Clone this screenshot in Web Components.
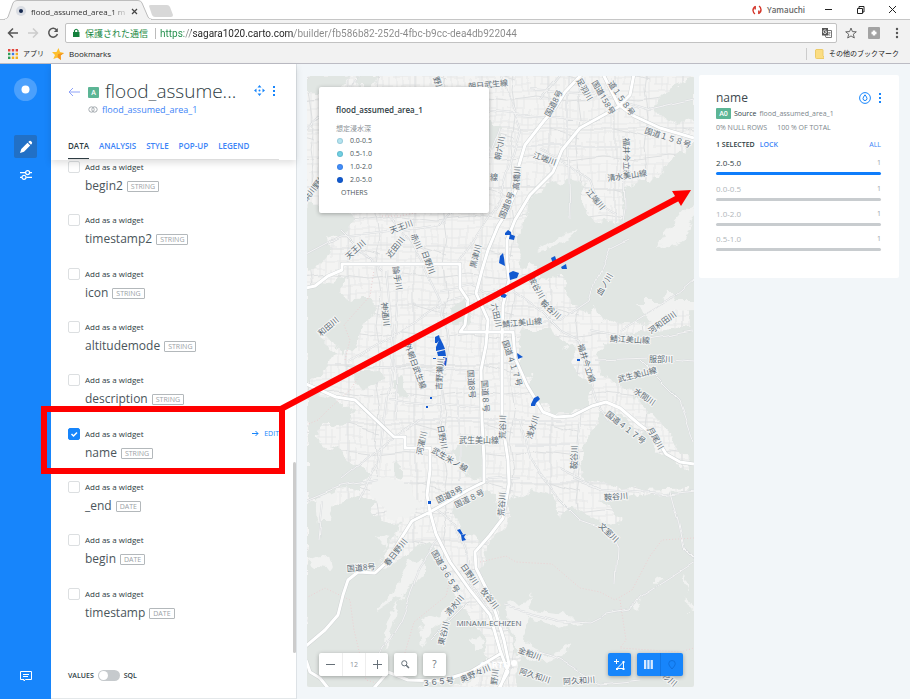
<!DOCTYPE html>
<html lang="ja">
<head>
<meta charset="utf-8">
<title>flood_assumed_area_1 map</title>
<style>
  html, body { height: 100%; }
  body {
    margin: 0; display: flex; flex-direction: column; overflow: hidden;
    font-family: "Open Sans", "Noto Sans CJK JP", sans-serif;
    color: #2e3c43; background: #f2f6f9;
  }
  main { flex: 1; min-height: 0; display: flex; }
</style>
</head>
<body>
<tab-strip><browser-tab>flood_assumed_area_1 m</browser-tab></tab-strip>
<browser-toolbar></browser-toolbar>
<bookmark-bar></bookmark-bar>
<main>
  <app-rail></app-rail>
  <layer-panel>
    <field-row field="begin2" type="STRING"></field-row>
    <field-row field="timestamp2" type="STRING"></field-row>
    <field-row field="icon" type="STRING"></field-row>
    <field-row field="altitudemode" type="STRING"></field-row>
    <field-row field="description" type="STRING"></field-row>
    <field-row field="name" type="STRING" checked></field-row>
    <field-row field="_end" type="DATE"></field-row>
    <field-row field="begin" type="DATE"></field-row>
    <field-row field="timestamp" type="DATE"></field-row>
  </layer-panel>
  <map-view>
    <map-legend slot="legend"></map-legend>
    <map-controls slot="controls"></map-controls>
  </map-view>
  <category-widget>
    <category-item count="1" active>2.0-5.0</category-item>
    <category-item count="1">0.0-0.5</category-item>
    <category-item count="1">1.0-2.0</category-item>
    <category-item count="1">0.5-1.0</category-item>
  </category-widget>
</main>
<callout-arrow></callout-arrow>

<script>
const base = `
  :host, *, *::before, *::after { box-sizing: border-box; }
  button { font: inherit; color: inherit; background: none; border: 0; padding: 0; margin: 0; display: flex; align-items: center; justify-content: center; cursor: pointer; }
  a { text-decoration: none; }
  svg { display: block; flex: none; }
`;
function element(tag, render, after) {
  customElements.define(tag, class extends HTMLElement {
    connectedCallback() {
      if (this.shadowRoot) return;
      const root = this.attachShadow({ mode: 'open' });
      const tpl = document.createElement('template');
      tpl.innerHTML = `<style>${base}</style>` + render(this);
      root.append(tpl.content.cloneNode(true));
      if (after) after(root);
    }
  });
}

/* ---------- browser window ---------- */
element('tab-strip', () => `
  <style>
    :host { display: flex; align-items: flex-start; height: 20px; background: #fff; border-bottom: 1px solid #c6c6c6; }
    .new { width: 26px; height: 12px; margin: 5px 0 0 -4px; }
    .win { margin-left: auto; display: flex; align-items: center; height: 19px; padding-right: 11px; font-size: 8px; color: #777; }
    .win button { width: 14px; height: 14px; }
    .user { gap: 5px; display: flex; align-items: center; margin-right: 16px; color: #666; font-weight: 600; }
    .ctl { display: flex; gap: 18px; }
  </style>
  <slot></slot>
  <button class="new" aria-label="New tab"><svg width="26" height="12"><path d="M1 1Q1 0 3 0H19Q21 0 22 2L25 10Q25 12 23 12H7Q5 12 4 10Z" fill="#d8d8d8"/></svg></button>
  <div class="win">
    <span class="user"><svg width="10" height="10" fill="none" stroke="#d4362a" stroke-width="1.4"><path d="M3.5 1.3Q.8 3 1 5.500Q1.300 8 3 9M6.500 8.700Q9.200 7 9 4.500Q8.700 2 7 1M3.200 1V4.500M6.800 5.500V9"/></svg>Yamauchi</span>
    <span class="ctl">
      <button aria-label="Minimize"><svg width="9" height="9"><path d="M1 4.500H8" stroke="#222"/></svg></button>
      <button aria-label="Restore"><svg width="9" height="9" fill="none" stroke="#222"><path d="M1.500 3.500H6.500V8.500H1.500ZM3 3V1.500H8V7H7"/></svg></button>
      <button aria-label="Close"><svg width="9" height="9"><path d="M1 1L8 8M8 1L1 8" stroke="#222"/></svg></button>
    </span>
  </div>`);

element('browser-tab', () => `
  <style>
    :host { display: flex; position: relative; width: 148px; height: 20px; margin-left: 4px; align-items: center; font: 8px "Open Sans", sans-serif; color: #333; padding: 2px 9px 0 12px; }
    .shape { position: absolute; inset: 0; }
    .dot { position: relative; margin-right: 5px; }
    span { position: relative; flex: 1; white-space: nowrap; overflow: hidden; -webkit-mask-image: linear-gradient(90deg, #000 85%, rgba(0,0,0,.3) 95%); }
    button { position: relative; width: 9px; height: 9px; margin: 0 4px 0 3px; }
  </style>
  <svg class="shape" width="148" height="20"><path d="M0 19.500Q3 19 4 17L9 3Q10 .5 13 .5H134Q137 .5 138 3L144 17Q145 19 148 19.500V20H0Z" fill="#f2f2f2" stroke="#bdbdbd"/><path d="M1 20H147" stroke="#f2f2f2" stroke-width="2"/></svg>
  <svg class="dot" width="10" height="10"><circle cx="5" cy="5" r="5" fill="#d9dce2"/><circle cx="5" cy="5" r="2" fill="#16294f"/></svg>
  <span><slot></slot></span>
  <button aria-label="Close tab"><svg width="7" height="7"><path d="M1 1L6 6M6 1L1 6" stroke="#444" stroke-width="1.200"/></svg></button>`);

element('browser-toolbar', () => `
  <style>
    :host { display: flex; align-items: center; height: 25px; padding: 1px 7px 0; background: #f2f2f2; }
    nav { display: flex; gap: 8px; width: 58px; }
    nav button { width: 12px; height: 12px; }
    .box { flex: 1; display: flex; align-items: center; height: 20px; background: #fff; border: 1px solid #c2c2c2; border-radius: 2px; padding: 0 4px 0 6px; font-size: 9px; }
    .safe { color: #1b8a45; display: flex; gap: 5px; align-items: center; padding-right: 7px; margin-right: 4px; border-right: 1px solid #bbb; font-family: "Open Sans","Noto Sans CJK JP",sans-serif; line-height: 11px; }
    input { flex: 1; min-width: 0; border: 0; outline: 0; padding: 0; margin: 0; height: 16px; font: 10px Roboto, sans-serif; color: #666;
      background: linear-gradient(90deg, #1b8a45 0 24px, #888 24px 31px, #222 31px 134px, #888 134px); -webkit-background-clip: text; background-clip: text; -webkit-text-fill-color: transparent; }
    .right { display: flex; align-items: center; gap: 11px; margin-left: 8px; }
  </style>
  <nav>
    <button aria-label="Back"><svg width="12" height="12" fill="none" stroke="#555" stroke-width="1.500"><path d="M11 6H1.500M6 1.500L1.500 6L6 10.500"/></svg></button>
    <button aria-label="Forward"><svg width="12" height="12" fill="none" stroke="#ccc" stroke-width="1.500"><path d="M1 6H10.500M6 1.500L10.500 6L6 10.500"/></svg></button>
    <button aria-label="Reload"><svg width="12" height="12" fill="none" stroke="#555" stroke-width="1.500"><path d="M9.800 3.200A4.400 4.400 0 1 0 10.400 7"/><path d="M10.800 1V5H6.800Z" fill="#555" stroke="none"/></svg></button>
  </nav>
  <div class="box">
    <span class="safe"><svg width="8" height="10"><rect x="1" y="4" width="6.500" height="5" fill="#14803c"/><path d="M2.500 4V2.500Q4.200 0 6 2.500V4" fill="none" stroke="#14803c" stroke-width="1.200"/></svg>保護された通信</span>
    <input aria-label="Address" value="https://sagara1020.carto.com/builder/fb586b82-252d-4fbc-b9cc-dea4db922044">
    <button aria-label="Translate"><svg width="10" height="10"><path d="M5 2.500H9.500V9.500H4L3 7" fill="#fff" stroke="#777"/><rect x="0" y="0" width="6" height="7.500" fill="#555"/><path d="M3 3.700H4.600Q4.400 5.600 3 5.600Q1.400 5.500 1.300 3.700Q1.500 1.900 3 1.900Q3.800 1.900 4.300 2.500" fill="none" stroke="#fff" stroke-width=".8"/><path d="M6 4.800H8.700M7.300 4.200V5.500Q7 7 5.800 7.600M6.500 6L8.300 8" fill="none" stroke="#777" stroke-width=".8"/></svg></button>
  </div>
  <div class="right">
    <button aria-label="Bookmark this page"><svg width="12" height="12"><path d="M6 1L7.400 4.600L11.300 4.800L8.300 7.200L9.300 11L6 8.900L2.700 11L3.700 7.200L.7 4.800L4.600 4.600Z" fill="none" stroke="#666"/></svg></button>
    <button aria-label="Extension"><svg width="12" height="12"><rect width="12" height="12" rx="1" fill="#a3a3a3"/><path d="M6 3.500V8.500M3.500 6H8.500" stroke="#fff" stroke-width="2.400"/></svg></button>
    <button aria-label="Menu"><svg width="12" height="12" fill="#555"><circle cx="6" cy="2" r="1.200"/><circle cx="6" cy="6" r="1.200"/><circle cx="6" cy="10" r="1.200"/></svg></button>
  </div>`);

element('bookmark-bar', () => `
  <style>
    :host { display: flex; align-items: center; height: 19px; padding: 0 11px 0 8px; background: #f2f2f2; border-bottom: 1px solid #bcbcc4; font: 8px "Open Sans","Noto Sans CJK JP",sans-serif; }
    a { display: flex; align-items: center; gap: 5px; color: #222; margin-right: 8px; white-space: nowrap; line-height: 12px; }
    .other { margin: 0 0 0 auto; border-left: 1px solid #ccc; padding-left: 8px; }
    .jp { font-size: 7px; }
  </style>
  <a href="#apps" class="jp"><svg width="10" height="10"><g fill="#e2453c"><path d="M0 0h2.400v2.400H0zM3.800 0h2.400v2.400H3.800zM7.600 0H10v2.400H7.600z"/></g><path d="M0 3.800h2.400v2.400H0z" fill="#2f9e58"/><path d="M3.800 3.800h2.400v2.400H3.800z" fill="#3b78e7"/><path d="M7.600 3.800H10v2.400H7.600zM3.800 7.600h2.400V10H3.800zM7.600 7.600H10V10H7.600z" fill="#f2b01e"/><path d="M0 7.600h2.400V10H0z" fill="#2f9e58"/></svg>アプリ</a>
  <a href="#bookmarks"><svg width="12" height="12"><path d="M6.500 0L8 4L12 5L8.600 7.500L9 12L5.500 9.500L1.300 11L3 7L0 4L4.500 4Z" fill="#fdbf2d"/><path d="M6 6L12 5L8.600 7.500L9 12L5.500 9.500Z" fill="#f4941e"/></svg>Bookmarks</a>
  <a href="#other" class="other jp"><svg width="9" height="10"><path d="M1 .5H7.500Q8 .5 8 1V7L9 8V9.500H1.500Q.5 9.500 .5 8.500V1Z" fill="#fbdd82" stroke="#eccb68"/></svg>その他のブックマーク</a>`);

/* ---------- left rail ---------- */
element('app-rail', () => `
  <style>
    :host { display: flex; flex-direction: column; align-items: center; width: 51px; flex: none; background: #1785fb; padding: 14px 0 15px; }
    button { width: 23px; height: 23px; border-radius: 2px; }
    .logo { border-radius: 50%; background: #4ba0fc; margin-bottom: 34px; }
    .on { background: #2170c6; margin-bottom: 5px; }
    .chat { margin-top: auto; height: 16px; }
  </style>
  <button class="logo" aria-label="Home"><svg width="9" height="9"><circle cx="4.500" cy="4.500" r="4" fill="#fff"/></svg></button>
  <button class="on" aria-label="Edit"><svg width="14" height="14" fill="#fff"><path d="M1 13L2.300 9L8.500 2.800L11.200 5.500L5 11.700ZM9.300 2L10.400 .9Q11.400 .3 12.400 1.400Q13.600 2.500 13 3.600L12 4.700Z"/></svg></button>
  <button aria-label="Settings"><svg width="12" height="10" fill="none" stroke="#fff" stroke-width="1.200"><path d="M0 2.600H5.500M9.800 2.600H12M0 7.300H2M6.300 7.300H12"/><circle cx="7.600" cy="2.600" r="2"/><circle cx="4" cy="7.300" r="2"/></svg></button>
  <button class="chat" aria-label="Support chat"><svg width="12" height="11" fill="none" stroke="#fff"><path d="M.5 .5H11.500V8.500H5.500L4 10V8.500H.5ZM3 3.500H9M3 5.500H8"/></svg></button>`);

/* ---------- layer panel ---------- */
element('layer-panel', () => `
  <style>
    :host { display: flex; flex-direction: column; width: 246px; flex: none; background: #fff; border-right: 1px solid #dde2e6; position: relative; min-height: 0; }
    header { height: 96px; flex: none; padding: 14px 17px 0; display: flex; flex-direction: column; box-shadow: 0 3px 7px rgba(0,0,0,.13); z-index: 1; background: #fff; }
    .top { display: flex; align-items: center; height: 25px; }
    h1 { flex: 1; margin: 0 0 0 6px; font: 300 19px/24px "Open Sans", sans-serif; color: #2e3c43; white-space: nowrap; }
    .badge { width: 11px; height: 11px; margin: 3px 0 0 8px; background: #5cb595; color: #fff; font: 600 7px/11px "Open Sans"; text-align: center; border-radius: 1px; }
    .back { margin-top: 3px; }
    .menu { display: flex; gap: 8px; color: #1785fb; padding-right: 4px; }
    .src { display: flex; align-items: center; gap: 4px; padding-left: 20px; margin: 0; height: 13px; font: 9px/13px "Open Sans"; }
    .src a, nav a { color: #3c84f7; }
    nav { margin-top: auto; height: 21px; border-bottom: 1px solid #ddd; display: flex; gap: 10px; font: 600 8px/13px "Open Sans"; }
    nav a { white-space: nowrap; }
    nav .on { color: #2e3c43; border-bottom: 1px solid #2e3c43; }
    .list { flex: 1; min-height: 0; display: grid; grid-auto-rows: 1fr; padding: 0 17px; }
    footer { height: 59px; flex: none; display: flex; align-items: center; gap: 4px; padding: 13px 0 0 17px; font: 600 7px/12px "Open Sans"; border-bottom: 1px solid #e4e8ea; }
    footer input { appearance: none; margin: 0; width: 22px; height: 11px; border-radius: 6px; background: #c6cacd; position: relative; }
    footer input::before { content: ""; position: absolute; left: 1px; top: 1px; width: 9px; height: 9px; border-radius: 50%; background: #fff; }
    .bar { position: absolute; right: 0; top: 398px; bottom: 46px; width: 3px; background: #ccc; border-radius: 2px; }
  </style>
  <header>
    <div class="top">
      <button class="back" aria-label="Back"><svg width="12" height="10" fill="none" stroke="#8ea2f8"><path d="M12 5H1M5 1L1 5L5 9"/></svg></button>
      <span class="badge">A</span>
      <h1>flood_assume...</h1>
      <div class="menu">
        <button aria-label="Center map"><svg width="11" height="11" fill="#1785fb"><circle cx="5.500" cy="5.500" r="1"/><path d="M5.500 0L7.500 2.500H3.500ZM5.500 11L7.500 8.500H3.500ZM0 5.500L2.500 3.500V7.500ZM11 5.500L8.500 3.500V7.500Z"/></svg></button>
        <button aria-label="Options"><svg width="2" height="10" fill="#1785fb"><path d="M0 0h2v2H0zM0 4h2v2H0zM0 8h2v2H0z"/></svg></button>
      </div>
    </div>
    <p class="src"><svg width="10" height="7" fill="none" stroke="#a5abb0"><circle cx="3.500" cy="3.500" r="2.700"/><circle cx="6.500" cy="3.500" r="2.700"/></svg><a href="#dataset">flood_assumed_area_1</a></p>
    <nav><a class="on" href="#data">DATA</a><a href="#analysis">ANALYSIS</a><a href="#style">STYLE</a><a href="#popup">POP-UP</a><a href="#legend">LEGEND</a></nav>
  </header>
  <div class="list"><slot></slot></div>
  <footer><label for="sql">VALUES</label><input id="sql" type="checkbox" role="switch"><label for="sql">SQL</label></footer>
  <div class="bar"></div>`);

element('field-row', el => `
  <style>
    :host { display: grid; grid-template-columns: 12px 1fr auto; column-gap: 5px; align-content: start; min-height: 0; }
    input { appearance: none; width: 12px; height: 12px; margin: 1px 0 0; border: 1px solid #dcdfe1; border-radius: 2px; background: #fff; }
    input:checked { border-color: #1785fb; background: #1785fb url('data:image/svg+xml,<svg xmlns="http://www.w3.org/2000/svg" width="10" height="10"><path d="M2.500 5L4.500 7L8 3.500" fill="none" stroke="white" stroke-width="1.500"/></svg>'); }
    label { font: 8px/13px "Open Sans"; white-space: nowrap; }
    a { color: #1785fb; font: 7px/13px "Open Sans"; display: flex; align-items: center; gap: 5px; }
    .name { grid-column: 2; display: flex; align-items: center; gap: 4px; font: 12px/16px "Open Sans"; color: #4a555b; margin-top: 5px; white-space: nowrap; }
    .tag { border: 1px solid #b3b8bb; border-radius: 1px; color: #9ba1a5; font: 7px/9px "Open Sans"; padding: 0 3px; margin-top: 1px; }
  </style>
  <input id="c" type="checkbox" ${el.hasAttribute('checked') ? 'checked' : ''}>
  <label for="c">Add as a widget</label>
  ${el.hasAttribute('checked') ? '<a href="#edit"><svg width="7" height="7" fill="none" stroke="#1785fb"><path d="M0 3.500H6M3.500 1L6 3.500L3.500 6"/></svg>EDIT</a>' : ''}
  <span class="name">${el.getAttribute('field')}<span class="tag">${el.getAttribute('type')}</span></span>`);

/* ---------- map ---------- */
const forests = [
  'M306 74H350L345 84L330 92H306ZM355 76L376 76L370 88L358 88Z',
  'M306 205H345L352 222L342 236L326 240L330 252L322 262L306 272ZM484 122L500 126L500 142L492 150L484 144Z',
  'M652 106L660 98L670 88L694 78V120L680 124L662 118Z',
  'M516 246L518 230L530 210L528 194L545 190L548 184L572 178L586 184L578 196L588 214L600 226L618 222L625 208L622 192L634 180L652 184L658 170L672 162L694 146V312L672 306L664 318L640 326L612 324L600 318L596 306L586 312L572 306L568 290L560 278L540 276L534 264L524 268Z',
  'M518 338L526 330L546 330L560 338L572 346L574 362L582 376L594 388L588 400L570 414L548 414L536 396L528 378L518 366Z',
  'M596 352L614 336L640 332L668 330L694 322V462L682 452L664 428L648 410L632 392L618 384L602 376Z',
  'M600 410L622 414L644 434L660 452L694 474V488L640 490L610 486L584 480L580 458L588 440Z',
  'M306 284L320 288L336 278L346 276L340 294L352 300L360 296L372 296L373 310L366 328L352 350L342 356L334 346L322 330L320 338L334 350L328 366L306 386Z',
  'M306 390L336 400L344 410L356 408L348 422L330 424L316 434L330 448L356 460L368 474L360 486L338 488L322 500L306 498ZM392 382L404 378L408 392L398 394ZM394 462L402 466L400 478L394 476ZM350 372L378 370L384 382L360 388Z',
  'M453 306L464 300L472 310L466 328L454 322ZM452 448L466 442L482 444L484 474L468 476L456 466Z',
  'M306 506L322 500L338 504L362 494L376 500L372 516L388 520L400 524L396 540L384 556L376 570L396 562L416 548L430 542L440 562L452 590L470 620L490 646L480 672L450 687H306Z',
  'M452 508L470 496L490 494L502 508L496 530L478 544L466 530L456 522Z',
  'M510 500L530 490L552 496L560 520L570 506L586 514L606 522L622 520L600 502L640 496L694 492V687H520L516 650L504 624L488 594L480 568L490 544L506 528Z',
  'M306 620L350 610L380 640L420 652L400 687H306Z'
];
const clearings = [
  'M372 480L410 480L420 510L404 520L384 512L374 500ZM376 536L392 540L386 548ZM376 610L392 596L408 560L424 556L424 574L400 596L390 640L384 650L388 620L402 596L378 612Z',
  'M470 640L478 636L486 646L474 652ZM318 498L338 488L328 524L320 524ZM306 560L328 556L332 570L316 568ZM420 626L450 606L456 612L434 630L424 646Z',
  'M506 604L530 600L536 592L528 610L556 614L590 620L556 626L526 616L522 632L532 650L556 654L572 644L560 658L524 660L510 630Z',
  'M656 576L664 580L656 584ZM684 572L690 578L690 596ZM685 596L692 610L688 612ZM632 604L642 600L636 608ZM560 346L566 344L566 350Z',
  'M654 250L672 226L690 206L694 216L684 240L666 246ZM540 250L560 236L576 230L556 246ZM636 302L660 302L664 292L678 292L676 300L694 300L694 310L664 312L656 330Z'
];
const roads = [
  'M582 74L565 92L555 108L543 122L525 145L519 165L516 190L508 210L498 226L488 250L482 270L476 293L488 320L486 345L481 370L482 420L484 460L484 482L468 490L444 504L430 512L412 521L400 540L387 562L375 573L358 572L348 580L343 595L338 615L325 630L306 646',
  'M634 74L630 95L618 107L600 117L580 128L562 150L553 172L530 195L515 220L507 240L507 262L509 280L503 305L502 340L502 420L508 460L509 484L503 518L490 535L475 552L476 568L488 592L496 614L504 640L509 664L500 688',
  'M603 74L618 104L634 116L660 128L694 138',
  'M306 288L315 286L328 276L342 270V264H460V288L468 300L465 325L460 332H513L515 358L527 385L543 412L556 417L572 416L592 406L606 402L620 408L640 425L655 436L666 454L680 462L694 464',
  'M306 384L336 397L355 400L394 437H405V448H430L430 470L427 495L430 512L436 534L450 562L470 590L490 615L500 650L508 672L499 688',
  'M306 660L310 672L320 678L328 688M374 688L388 672L408 680L440 681L470 672L500 654'
];
const minor = [
  'M306 128L340 100L360 74M470 110L520 115L600 120M500 76L520 130L500 200L460 260M530 90L600 95L650 110L694 100M568 76V140L570 220M500 146H620M624 136L626 210L624 222M540 150L570 165L590 180L600 205L616 214V226',
  'M306 254L340 236L400 230L440 224L480 180L500 130M382 270L360 250L340 230M390 215L410 240L440 300L446 340L440 420L446 460M398 265V300L390 380L380 460L360 500M350 362L420 320L450 300L500 290',
  'M440 290L470 285L500 300M370 365L480 370M390 400L480 408M340 480L390 440L420 420L500 420M440 500L490 480L520 478M460 400V480M398 420L392 330L386 270',
  'M512 290L540 310L560 330L580 340L590 380L596 400L610 420M514 320H560L590 300L596 280L610 250L630 240M590 330L640 340L694 330M596 360L650 358L694 362M560 420L580 420L575 480L600 490',
  'M513 420H580M515 445H570M520 420L530 460L560 500L580 520L610 530L618 550L616 586M560 470L600 490L660 494L694 490M504 606L530 612L560 620L590 622L606 614L630 610L640 596L656 586L694 562M670 490L678 520L684 550L694 560',
  'M306 500L340 486L380 480M322 500L318 540M376 660L400 620L420 570L440 540M436 510L456 524L466 550L470 580L494 620M530 650L560 660L600 684L640 680M560 76L540 100M640 360L680 400L694 440M620 330L670 300L694 280M430 640L450 620L470 600'
];
const borders = [
  'M382 216L400 216L420 212M306 425L318 420L330 408L350 390L360 375M345 360L350 340L344 325L370 296L374 270',
  'M306 598L325 588L350 600L354 630L366 680L380 684M404 656L414 622L446 596L450 580M480 562L506 556L516 562L552 564L580 588L600 592L615 600L632 590L650 556L662 540L694 538M620 600L626 640L620 648L650 650L680 652L694 648'
];
const floods = [
  'M505 233L508 230L511 232V235H505ZM510 234L515 236L514 240L509 239Z',
  'M499 263L500 256L503 253L504 258L505 266ZM509 273L513 271L519 273L517 278L510 280ZM551 258L555 256L557 262L553 264ZM561 267L566 264L567 269H562ZM501 292L507 295L505 298L501 297Z',
  'M435 337L439 335L440 339L437 343H435ZM436 347L440 338L443 344L445 349L436 351ZM437 352L445 350L446 356L438 356ZM433 358H436V359H433ZM443 357L447 358L446 366H441L443 362Z',
  'M517 353L523 357L518 359ZM531 404L534 398L538 396L540 399L536 403L535 406H531Z',
  'M430 397H432V399H430ZM426 406H428V408H426ZM428 501H431V504H428ZM577 359H580V361H577Z',
  'M457 530L460 529L463 534L461 535ZM461 535L466 534L464 537L466 540L462 541Z'
];
/* text, centre x, centre y, rotation */
const places = [
  ['野川',439,84,70],['朝日武生線',488,84,-6],['朝六川',499,148,-80],['線',494,176,0],['浜川野線',314,187,-52],['国道8号',506,205,-68],
  ['天王川',401,226,-20],['天王川',355,249,-42],['近田川',395,247,-52],['赤川',417,241,65],['日野川',429,262,70],['黒津川',475,256,-76],['論手川',398,278,80],
  ['国道8号',553,103,-62],['足羽川',585,89,60],['国道158号',604,97,60],['道１５８号',622,98,55],['国道１５８号',668,137,18],['江端川',545,158,20],['高橋川',516,178,-86],
  ['福井今立線',627,158,89],['清水美山線',627,175,-8],['江端川',596,199,50],['神通川',386,314,84],['和田川',328,326,-40],['外朝日武生線',416,366,70],['吉野瀬川',439,374,-86],
  ['国道8号',472,384,86],['国道８号',486,396,86],['日野川',443,437,80],['河濯川',421,443,-78],['武生美山線',479,439,0],['武生米ノ線',450,459,30],['荒谷川',502,427,-89],['六田川',497,315,78],
  ['鞍谷川',537,287,60],['鞍谷川',551,309,42],['血ノ川',604,284,-60],['鯖江美山線',522,322,-5],['河和田川',662,322,-36],['鯖江美山線',630,339,3],['服部川',661,358,0],['武生美山線',637,374,-14],
  ['水間川',645,396,34],['福井今立線',587,363,72],['国道４１７号',513,363,72],['国道４１７号',626,427,38],['月尾川',656,438,60],['浅水川',532,427,-72],['鞍谷川',573,457,-90],
  ['国道8号',449,494,-26],['国道８号',469,498,-25],['荒谷川',501,504,-86],['春日野川',395,552,-52],['国道8号',361,567,-4],['国道３６５号',446,571,60],['日野川',470,574,55],['牧谷川',490,598,52],
  ['清水川',454,605,-50],['東谷川',443,633,-76],['MINAMI-ECHIZEN',489,622,0],['奥野々川',475,673,-24],['３６５号',438,681,-6],['野川',494,677,-84],
  ['鞍谷川',616,496,-5],['文室川',609,532,44],['金粕川',530,653,20],['阿久和川',535,675,18],['阿久和川',579,680,-4],['杉川',670,679,40]
];

element('map-view', () => `
  <style>
    :host { display: block; flex: 1; min-width: 0; position: relative; margin: 12px 5px 12px 10px; overflow: hidden; border-radius: 2px; background: #f4f4f3; }
    .tiles { position: absolute; inset: 0; width: 100%; height: 100%; }
    text { font-family: "Open Sans", "Noto Sans CJK JP", sans-serif; text-anchor: middle; dominant-baseline: central; fill: #5c6b75; stroke: #f4f5f4; stroke-width: 2px; paint-order: stroke; }
    .legend { position: absolute; left: 12px; top: 11px; }
    .controls { position: absolute; left: 12px; right: 11px; bottom: 11px; }
  </style>
  <svg class="tiles" viewBox="307 76 387 611" preserveAspectRatio="xMidYMid slice" role="img" aria-label="Map">
    <defs>
      <pattern id="g1" width="28" height="32" patternUnits="userSpaceOnUse"><path d="M0 4H28M0 13H17M9 21H28M0 28H28M4 0V32M11 4V21M18 0V28M24 13V32" stroke="#e7e8e8" fill="none"/></pattern>
      <pattern id="g2" width="67" height="59" patternUnits="userSpaceOnUse"><path d="M0 11H67M13 0V59M0 38L34 42L67 38M45 0L41 30L45 59M13 11L45 20" stroke="#dddfe0" fill="none"/></pattern>
      <filter id="rough" x="0" y="0" width="1" height="1"><feTurbulence type="fractalNoise" baseFrequency=".07" numOctaves="3" seed="4"/><feDisplacementMap in="SourceGraphic" scale="16" xChannelSelector="R" yChannelSelector="G"/></filter>
      <filter id="bend" x="0" y="0" width="1" height="1"><feTurbulence type="fractalNoise" baseFrequency=".025" numOctaves="2" seed="9"/><feDisplacementMap in="SourceGraphic" scale="9" xChannelSelector="R" yChannelSelector="G"/></filter>
    </defs>
    <g filter="url(#bend)"><rect x="290" y="60" width="420" height="640" fill="#f4f4f3"/><rect x="290" y="60" width="420" height="640" fill="url(#g1)"/><rect x="290" y="60" width="420" height="640" fill="url(#g2)"/></g>
    <g filter="url(#rough)"><path d="M280 50h1v1h-1zM720 710h1v1h-1z" fill="#e1e6e3"/><path d="${forests.join('')}" fill="#e1e6e3"/><path d="M690 146H712V700H690ZM290 640H306V700H290ZM300 682H450V700H300ZM520 682H700V700H520Z" fill="#e1e6e3"/><path d="${clearings.join('')}" fill="#f1f2f1"/></g>
    <g filter="url(#bend)" fill="none"><path d="M280 50h1M720 710h1" stroke="#d9dcde"/><path d="${minor.join('')}" stroke="#d9dcde" stroke-width="2"/><path d="${minor.join('')}" stroke="#f4f4f4" stroke-width="1"/></g>
    <path d="${borders.join('')}" fill="none" stroke="#ecd0d2" stroke-dasharray="1 2"/>
    <g fill="none" stroke-linejoin="round"><path d="${roads.join('')}" stroke="#cfd3d4" stroke-width="4"/><path d="${roads.join('')}" stroke="#fff" stroke-width="3"/></g>
    <path d="${floods.join('')}" fill="#1259d0"/>
    <text x="495" y="664" font-size="9" font-weight="700" style="fill:#fff;stroke:none">CARTO</text>
    <circle cx="514" cy="663" r="3" fill="#fff"/>
    ${places.map(([t, x, y, r]) => `<text font-size="8" transform="translate(${x} ${y}) rotate(${r})">${t}</text>`).join('')}
  </svg>
  <div class="legend"><slot name="legend"></slot></div>
  <div class="controls"><slot name="controls"></slot></div>`);

element('map-legend', () => `
  <style>
    :host { display: block; width: 170px; background: #fff; border-radius: 2px; box-shadow: 0 1px 4px rgba(0,0,0,.3); padding: 16px 17px 14px; }
    h2 { margin: 0 0 7px; font: 600 8px/13px "Open Sans"; }
    h3 { margin: 0; font: 7px/10px "Noto Sans CJK JP", sans-serif; color: #8b9297; }
    ul { list-style: none; margin: 1px 0 0; padding: 0; }
    li { display: flex; align-items: center; gap: 7px; font: 7px/13px "Open Sans"; color: #4a555b; padding-left: 1px; }
    i { width: 6px; height: 6px; border-radius: 50%; background: var(--c); border: 1px solid rgba(0,60,100,.15); }
    .o { padding-left: 5px; }
  </style>
  <h2>flood_assumed_area_1</h2>
  <h3>想定浸水深</h3>
  <ul>
    <li><i style="--c:#b5e5f0"></i>0.0-0.5</li>
    <li><i style="--c:#72d0e2"></i>0.5-1.0</li>
    <li><i style="--c:#438dfa"></i>1.0-2.0</li>
    <li><i style="--c:#1259d0"></i>2.0-5.0</li>
    <li class="o">OTHERS</li>
  </ul>`);

element('map-controls', () => `
  <style>
    :host { display: flex; gap: 6px; font: 7px/23px "Open Sans"; color: #8b9297; }
    .box { display: flex; height: 23px; background: #fff; border-radius: 2px; box-shadow: 0 1px 4px rgba(0,0,0,.3); }
    .box > * { width: 23px; text-align: center; border-left: 1px solid #eee; }
    .box > :first-child { border-left: 0; }
    .blue { background: #1785fb; }
    .blue > * { border-color: #1276e4; }
    .push { margin-left: auto; }
    .q { font-size: 10px; color: #6b747a; }
  </style>
  <div class="box"><button aria-label="Zoom out"><svg width="9" height="9"><path d="M0 4.500H9" stroke="#667078"/></svg></button><span>12</span><button aria-label="Zoom in"><svg width="9" height="9"><path d="M0 4.500H9M4.500 0V9" stroke="#667078"/></svg></button></div>
  <div class="box"><button aria-label="Search"><svg width="9" height="9" fill="none" stroke="#667078"><circle cx="3.300" cy="3.300" r="2.600"/><path d="M5.200 5.200L8 8" stroke-width="1.500"/></svg></button></div>
  <div class="box"><button class="q">?</button></div>
  <div class="box blue push"><button aria-label="Add geometry"><svg width="12" height="12" fill="none" stroke="#fff"><path d="M2.500 0V5M0 2.500H5M3 9.500L9.500 3M9.500 3V9.500H3" /><path d="M2 9h2v2H2zM8.500 9h2v2h-2zM8.500 2h2v2h-2z" fill="#fff" stroke="none"/></svg></button></div>
  <div class="box blue"><button aria-label="Table view"><svg width="9" height="9" fill="#d8eaff"><path d="M0 0h2.300v9H0zM3.300 0h2.300v9H3.300zM6.600 0h2.300v9H6.600z"/></svg></button><button aria-label="Point view"><svg width="8" height="10" fill="none" stroke="#1070dc"><path d="M4 9Q.7 5.500 .7 3.800A3.300 3.300 0 0 1 7.300 3.800Q7.300 5.500 4 9Z"/></svg></button></div>`);

/* ---------- category widget ---------- */
element('category-widget', () => `
  <style>
    :host { display: block; align-self: flex-start; width: 200px; flex: none; margin: 11px 11px 0 0; padding: 14px 18px 21px 17px; background: #fff; border-radius: 2px; font: 7px/12px "Open Sans"; }
    .row { display: flex; align-items: center; }
    h2 { flex: 1; margin: 0; font: 12px/17px "Open Sans"; color: #3c484e; }
    .badge { background: #5cb595; color: #fff; font: 600 7px/11px "Open Sans"; width: 15px; text-align: center; border-radius: 1px; }
    .src { height: 15px; color: #2e3c43; gap: 3px; }
    .src .muted, .stats { color: #7c868c; }
    .stats { gap: 10px; height: 14px; }
    .sel { height: 20px; gap: 5px; margin-bottom: 1px; font-weight: 600; }
    .sel a { color: #3c84f7; font-weight: 600; }
    .sel .all { margin-left: auto; font-weight: 400; }
    .menu { display: flex; gap: 8px; }
  </style>
  <div class="row"><h2>name</h2><div class="menu">
    <button aria-label="Auto style"><svg width="12" height="12" fill="none" stroke="#1785fb"><circle cx="6" cy="6" r="5.400"/><path d="M6 2.800Q8 5.300 8 6.700Q7.800 8.500 6 8.600Q4.200 8.500 4 6.700Q4 5.300 6 2.800Z"/></svg></button>
    <button aria-label="Options"><svg width="2" height="10" fill="#1785fb"><path d="M0 0h2v2H0zM0 4h2v2H0zM0 8h2v2H0z"/></svg></button></div></div>
  <div class="row src"><span class="badge">A0</span><span>Source</span><span class="muted">flood_assumed_area_1</span></div>
  <div class="row stats"><span>0% NULL ROWS</span><span>100 % OF TOTAL</span></div>
  <div class="row sel"><span>1 SELECTED</span><a href="#lock">LOCK</a><a class="all" href="#all">ALL</a></div>
  <slot></slot>`);

element('category-item', () => `
  <style>
    :host { display: block; height: 25px; color: #b0b6b9; --bar: #c8cccf; }
    :host([active]) { color: #2e3c43; --bar: #0f7dfb; height: 26px; }
    .t { display: flex; justify-content: space-between; align-items: center; font: 8px/13px "Open Sans"; }
    small { font-size: 7px; color: #9ba1a5; }
    .b { height: 3px; border-radius: 2px; background: var(--bar); margin-top: 3px; }
  </style>
  <div class="t"><span><slot></slot></span><small></small></div><div class="b"></div>`,
  root => { root.querySelector('small').textContent = root.host.getAttribute('count'); });

/* ---------- callout drawn over the whole page ---------- */
element('callout-arrow', () => `
  <style>:host { position: absolute; left: 0; top: 0; pointer-events: none; z-index: 5; }</style>
  <svg width="700" height="480" role="img" aria-label="Callout"><path d="M44 409H282V471H44Z" fill="none" stroke="#f00" stroke-width="6"/><path d="M281 409L678 198" stroke="#f00" stroke-width="6"/><path d="M691 190L672 191L681 206Z" fill="#f00"/></svg>`);
</script>
</body>
</html>
